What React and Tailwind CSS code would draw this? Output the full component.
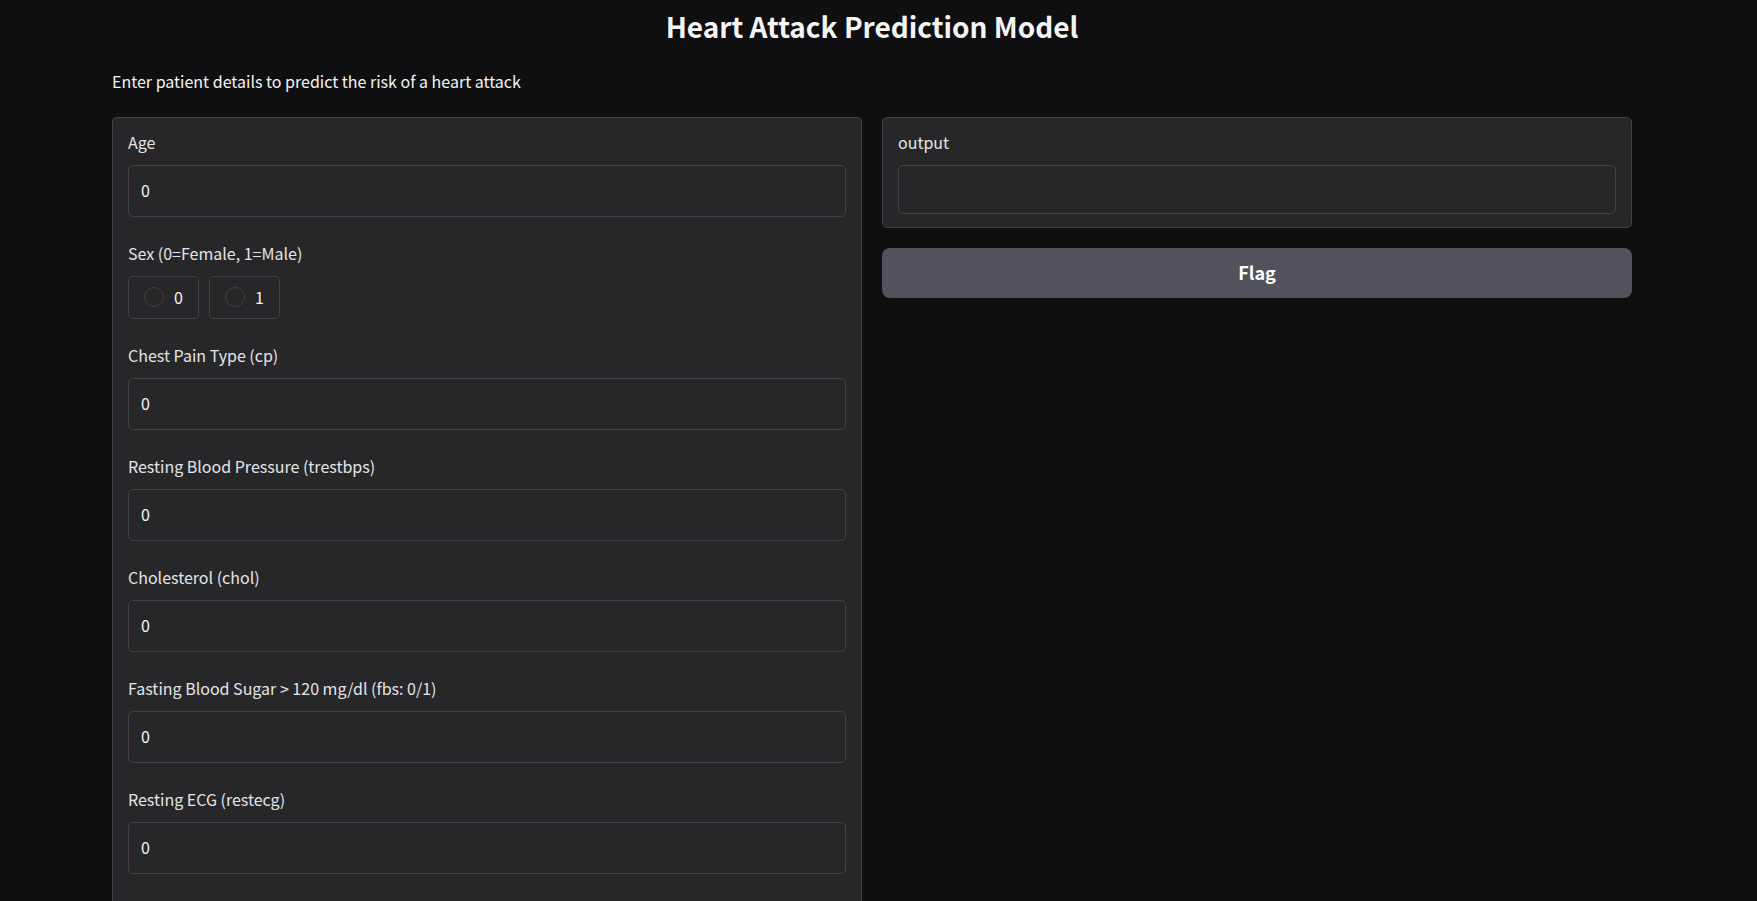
const textFields = [
  { id: "cp", label: "Chest Pain Type (cp)" },
  { id: "trestbps", label: "Resting Blood Pressure (trestbps)" },
  { id: "chol", label: "Cholesterol (chol)" },
  { id: "fbs", label: "Fasting Blood Sugar > 120 mg/dl (fbs: 0/1)" },
  { id: "restecg", label: "Resting ECG (restecg)" },
];

function NumberField({ id, label }) {
  return (
    <div className="flex flex-col gap-[11px] px-[15px] py-3">
      <label htmlFor={id} className="leading-6 text-zinc-200">
        {label}
      </label>
      <input
        id={id}
        type="text"
        inputMode="numeric"
        defaultValue="0"
        className="h-[52px] w-full rounded-[5px] border border-[#424246] bg-[#27272a] px-3 pb-0.5 text-zinc-100 outline-none"
      />
    </div>
  );
}

function SexField() {
  return (
    <fieldset className="px-[15px] py-3">
      <legend className="float-left mb-[11px] w-full leading-6 text-zinc-200">
        Sex (0=Female, 1=Male)
      </legend>
      <div className="clear-both flex flex-wrap gap-[10px]">
        {["0", "1"].map((value) => (
          <label
            key={value}
            className="flex h-[43px] items-center gap-[10px] rounded-[5px] border border-[#424246] px-[15px] pb-0.5 text-zinc-100"
          >
            <input
              type="radio"
              name="sex"
              value={value}
              className="size-5 appearance-none rounded-full border border-[#424246] checked:border-[6px] checked:border-orange-600"
            />
            {value}
          </label>
        ))}
      </div>
    </fieldset>
  );
}

export default function App() {
  return (
    <main className="flex min-h-screen flex-col bg-[#0f0f11] pr-[125px] pl-28 font-['Noto_Sans_CJK_SC','Noto_Sans',sans-serif] text-base text-zinc-100">
      <h1 className="pt-2 text-center text-[28px] leading-9 font-semibold">
        Heart Attack Prediction Model
      </h1>
      <p className="mt-[25px] mb-6 leading-6">
        Enter patient details to predict the risk of a heart attack
      </p>
      <div className="grid flex-1 grid-cols-2 gap-5">
        <form className="rounded-t-[5px] border border-b-0 border-[#424246] bg-[#27272a]">
          <NumberField id="age" label="Age" />
          <SexField />
          {textFields.map((field) => (
            <NumberField key={field.id} {...field} />
          ))}
        </form>
        <section className="flex flex-col gap-5">
          <div className="flex flex-col gap-[11px] rounded-[5px] border border-[#424246] bg-[#27272a] px-[15px] pt-3 pb-[13px]">
            <label htmlFor="output" className="leading-6 text-zinc-200">
              output
            </label>
            <input
              id="output"
              type="text"
              readOnly
              className="h-[49px] w-full rounded-[5px] border border-[#424246] bg-[#27272a] px-3 text-zinc-100 outline-none"
            />
          </div>
          <button
            type="button"
            className="h-[50px] rounded-lg bg-zinc-600 pb-0.5 text-lg font-semibold text-white"
          >
            Flag
          </button>
        </section>
      </div>
    </main>
  );
}
